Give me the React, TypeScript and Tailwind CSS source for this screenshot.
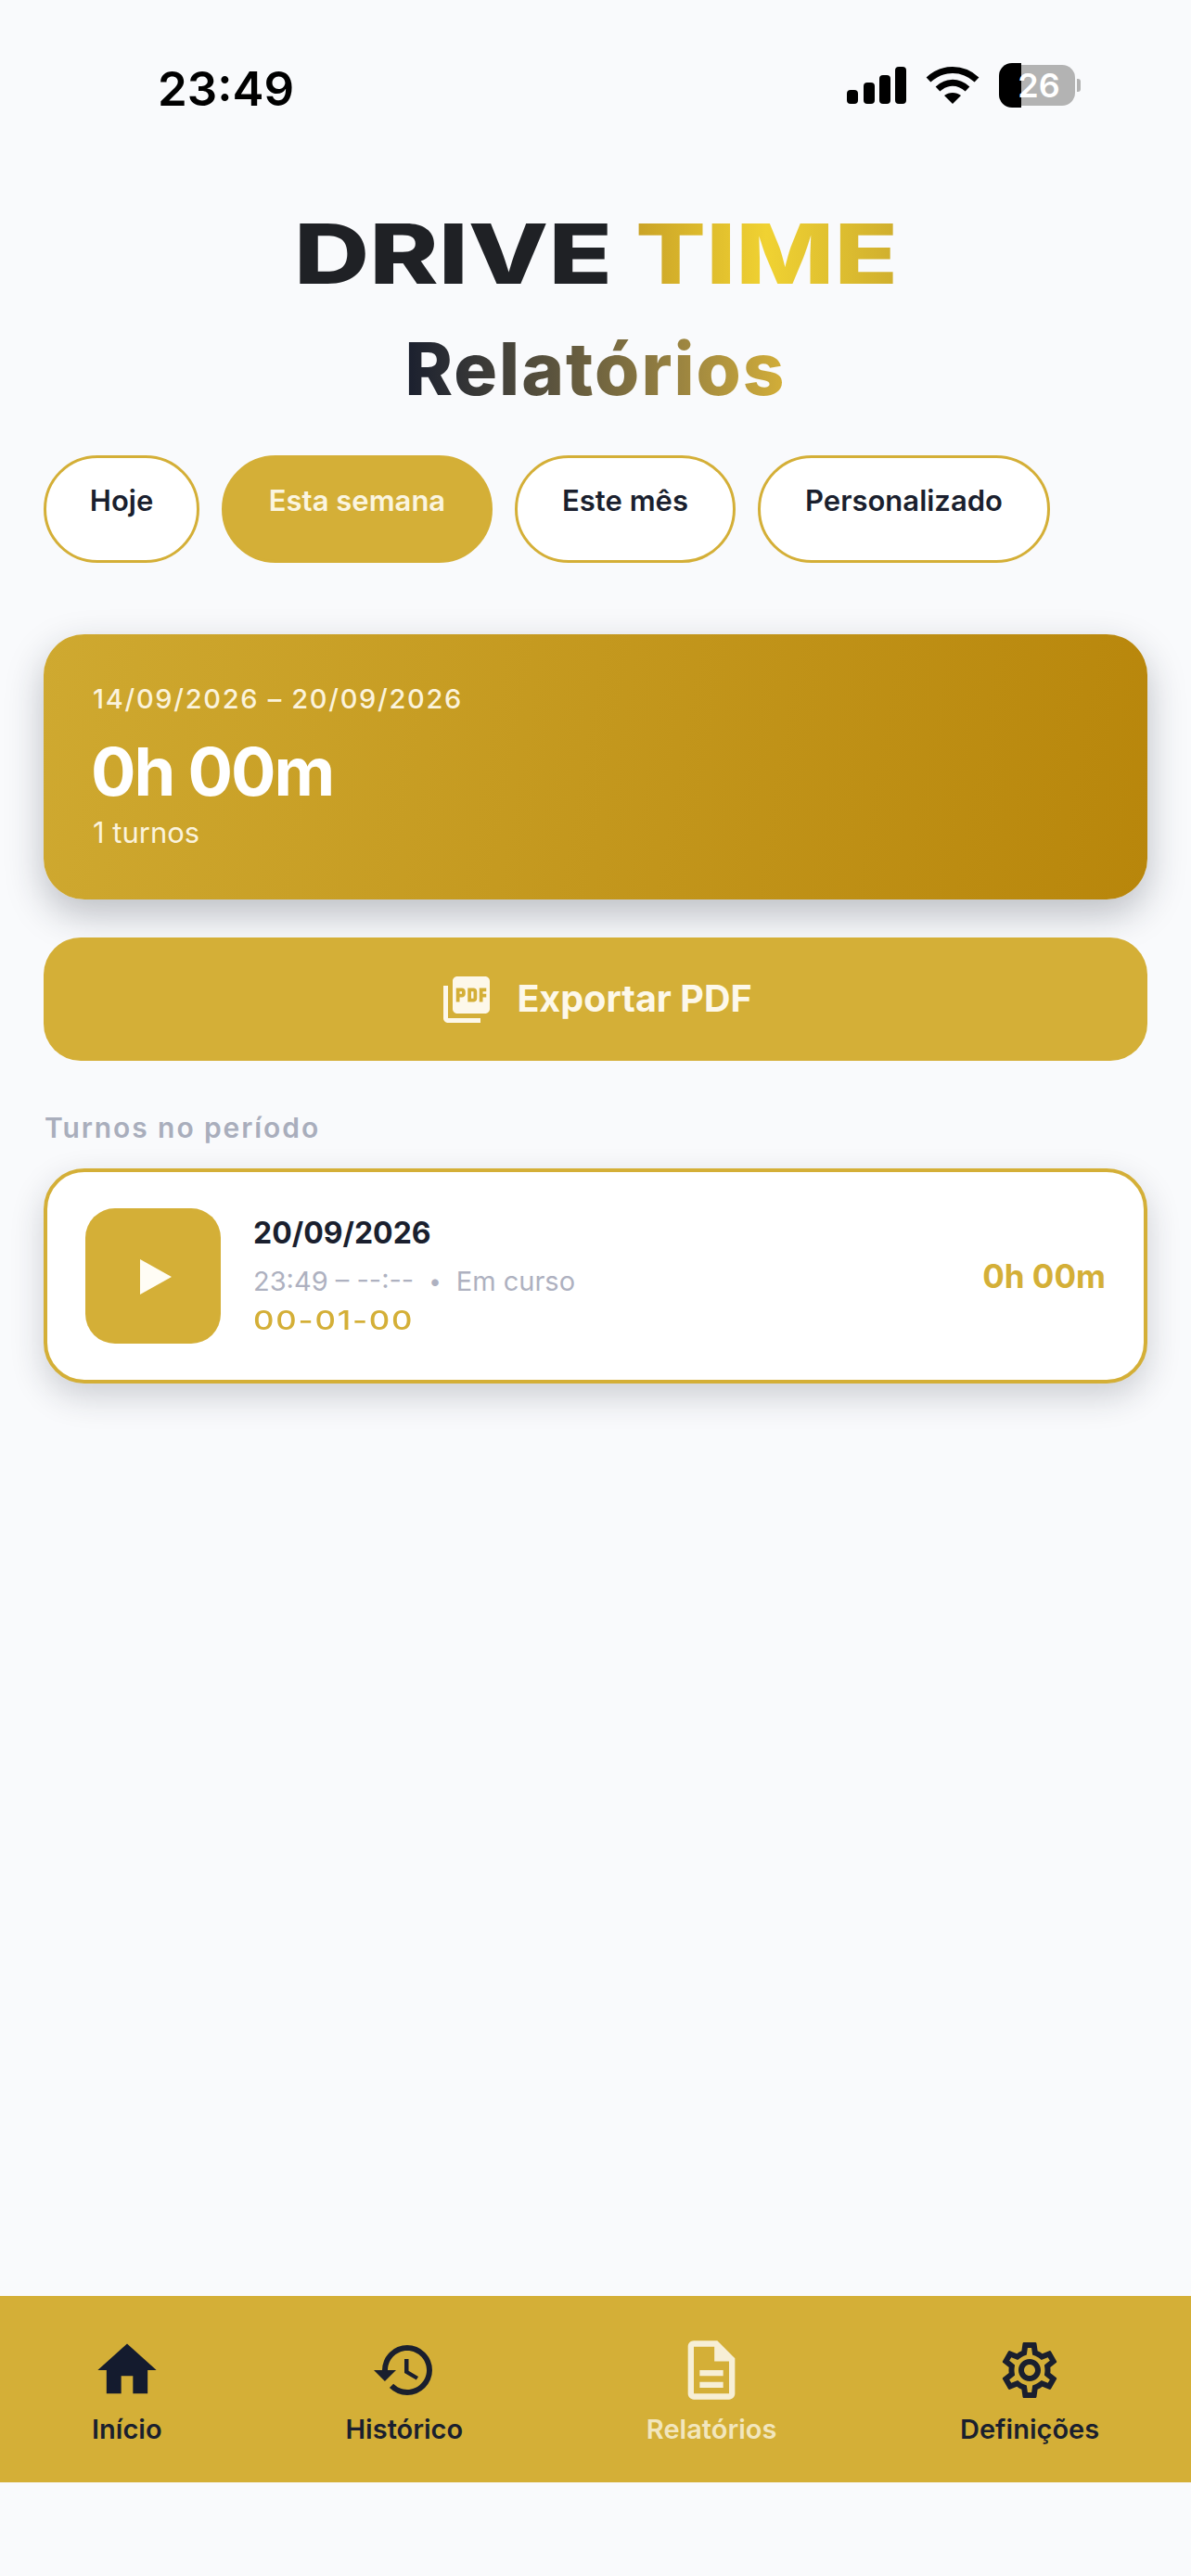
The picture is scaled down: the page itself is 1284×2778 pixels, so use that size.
import { MdHome, MdHistory, MdOutlineDescription, MdOutlineSettings, MdPictureAsPdf } from "react-icons/md";

const filters = [
  { label: "Hoje", width: "w-[168px]" },
  { label: "Esta semana", width: "w-[292px]", active: true },
  { label: "Este mês", width: "w-[238px]" },
  { label: "Personalizado", width: "w-[315px]" },
];

function StatusBar() {
  return (
    <div className="flex h-[226px] items-start justify-between pl-[170px] pr-[119px] pt-[66px]">
      <span className="text-[51px] leading-[60px] font-semibold text-black font-['Inter',sans-serif]">23:49</span>
      <div className="flex items-center gap-[21px] pt-[4px]">
        <svg width="64" height="40" viewBox="0 0 64 40" className="fill-black">
          <rect x="0" y="25" width="12" height="15" rx="4" />
          <rect x="18" y="17" width="12" height="23" rx="4" />
          <rect x="35" y="9" width="12" height="31" rx="4" />
          <rect x="52" y="0" width="12" height="40" rx="4" />
        </svg>
        <svg width="58" height="42" viewBox="0 0 58 42" className="fill-none stroke-black" strokeWidth="7">
          <path d="M3 15 C18 1 40 1 55 15" />
          <path d="M13 25 C23 16 35 16 45 25" />
          <path d="M29 41 L20 32 C25 28 33 28 38 32 Z" className="fill-black stroke-none" />
        </svg>
        <div className="flex items-center gap-[2px]">
          <div className="relative flex h-[44px] w-[82px] items-center rounded-[14px] bg-[#b3b3b3]">
            <div className="absolute -inset-y-[2px] left-0 w-[24px] rounded-l-[14px] bg-black" />
            <span className="relative w-full pl-[4px] text-center text-[36px] leading-none font-semibold text-white font-['Inter',sans-serif]">26</span>
          </div>
          <div className="h-[14px] w-[4px] rounded-r-[3px] bg-[#b3b3b3]" />
        </div>
      </div>
    </div>
  );
}

function Logo() {
  return (
    <div className="flex flex-col items-center">
      <div className="flex h-[96px] scale-x-[1.25] items-center gap-[20px] text-[90px] leading-none font-extrabold font-['Inter',sans-serif]">
        <span className="text-[#1f2125]">DRIVE</span>
        <span className="bg-linear-to-r from-[#c9a227] via-[#f0d232] to-[#cfae2e] bg-clip-text text-transparent">TIME</span>
      </div>
      <h1 className="mt-[32px] bg-linear-to-r from-[#1a1f2e] to-[#d4af37] bg-clip-text text-[78px] leading-[88px] font-extrabold tracking-[2px] text-transparent font-['Inter',sans-serif]">
        Relatórios
      </h1>
    </div>
  );
}

function Filters() {
  return (
    <div className="mt-[49px] flex gap-[24px]">
      {filters.map((f) => (
        <button
          key={f.label}
          className={`h-[116px] ${f.width} rounded-[58px] border-[3px] border-[#d4af37] pb-[18px] text-[31px] font-semibold ${
            f.active ? "bg-[#d4af37] text-[#fbf5e0]" : "bg-white text-[#1a1f2e]"
          }`}
        >
          {f.label}
        </button>
      ))}
    </div>
  );
}

function TotalCard() {
  return (
    <div className="mt-[77px] h-[286px] rounded-[44px] bg-linear-[100deg] from-[#cfa930] to-[#b8860b] pl-[53px] pt-[50px] text-white shadow-[0_16px_40px_rgba(30,35,50,0.28)]">
      <p className="text-[29px] leading-[40px] font-medium tracking-[1.7px] text-[#fbf3dc]">14/09/2026 – 20/09/2026</p>
      <p className="mt-[16px] -ml-[2px] text-[72px] leading-[84px] font-bold tracking-[-2px]">0h 00m</p>
      <p className="mt-[4px] text-[31px] leading-[40px] text-[#fbf3dc]">1 turnos</p>
    </div>
  );
}

function ExportButton() {
  return (
    <button className="mt-[41px] flex h-[133px] w-full items-center justify-center gap-[24px] rounded-[40px] bg-[#d4af37] text-[39.5px] font-bold text-[#fdf8ea]">
      <MdPictureAsPdf className="size-[60px]" />
      Exportar PDF
    </button>
  );
}

function ShiftCard() {
  return (
    <div className="mt-[24px] flex h-[232px] items-center rounded-[44px] border-[4px] border-[#d4af37] bg-white pl-[41px] pr-[41px] shadow-[0_14px_36px_rgba(30,35,50,0.2)]">
      <div className="flex size-[146px] items-center justify-center rounded-[32px] bg-[#d4af37]">
        <svg width="34" height="38" viewBox="0 0 34 38" className="ml-[6px] mt-[2px] fill-[#fffdf5]">
          <path d="M0 0 L34 19 L0 38 Z" />
        </svg>
      </div>
      <div className="ml-[35px] flex-1">
        <p className="text-[32px] leading-[44px] font-bold text-[#1a1f2e]">20/09/2026</p>
        <p className="mt-[10px] flex items-center text-[29px] leading-[40px] text-[#aeb1c0]">
          <span>23:49 – --:--</span>
          <span className="mx-[16px] text-[24px]">•</span>
          <span>Em curso</span>
        </p>
        <p className="origin-left scale-x-[1.2] pt-[2px] text-[29px] leading-[40px] font-medium tracking-[1.5px] text-[#d4af37]">00-01-00</p>
      </div>
      <span className="text-[35px] font-bold text-[#d4af37]">0h 00m</span>
    </div>
  );
}

function BottomNav() {
  const items = [
    { label: "Início", icon: <MdHome className="size-[76px] text-[#141b2e]" /> },
    { label: "Histórico", icon: <MdHistory className="size-[72px] text-[#1a1f2e]" /> },
    { label: "Relatórios", icon: <MdOutlineDescription className="size-[76px] text-[#f7efd6]" />, active: true },
    { label: "Definições", icon: <MdOutlineSettings className="size-[72px] text-[#1a1f2e]" /> },
  ];
  return (
    <nav className="flex h-[201px] items-start justify-around bg-[#d4af37] pt-[42px]">
      {items.map((item) => (
        <div key={item.label} className="flex flex-col items-center">
          <div className="flex h-[76px] items-center justify-center">{item.icon}</div>
          <span className={`mt-[6px] text-[29px] leading-[40px] font-semibold ${item.active ? "text-[#f2e6bd]" : "text-[#1a1f2e]"}`}>
            {item.label}
          </span>
        </div>
      ))}
    </nav>
  );
}

export default function App() {
  return (
    <div className="flex min-h-[2778px] flex-col bg-[#f9fafc] pb-[101px] font-['Inter',sans-serif]">
      <StatusBar />
      <Logo />
      <main className="flex-1 px-[47px]">
        <Filters />
        <TotalCard />
        <ExportButton />
        <p className="mt-[52px] pl-[1px] text-[30px] leading-[40px] font-semibold tracking-[1.9px] text-[#a9aebc]">Turnos no período</p>
        <ShiftCard />
      </main>
      <BottomNav />
    </div>
  );
}
